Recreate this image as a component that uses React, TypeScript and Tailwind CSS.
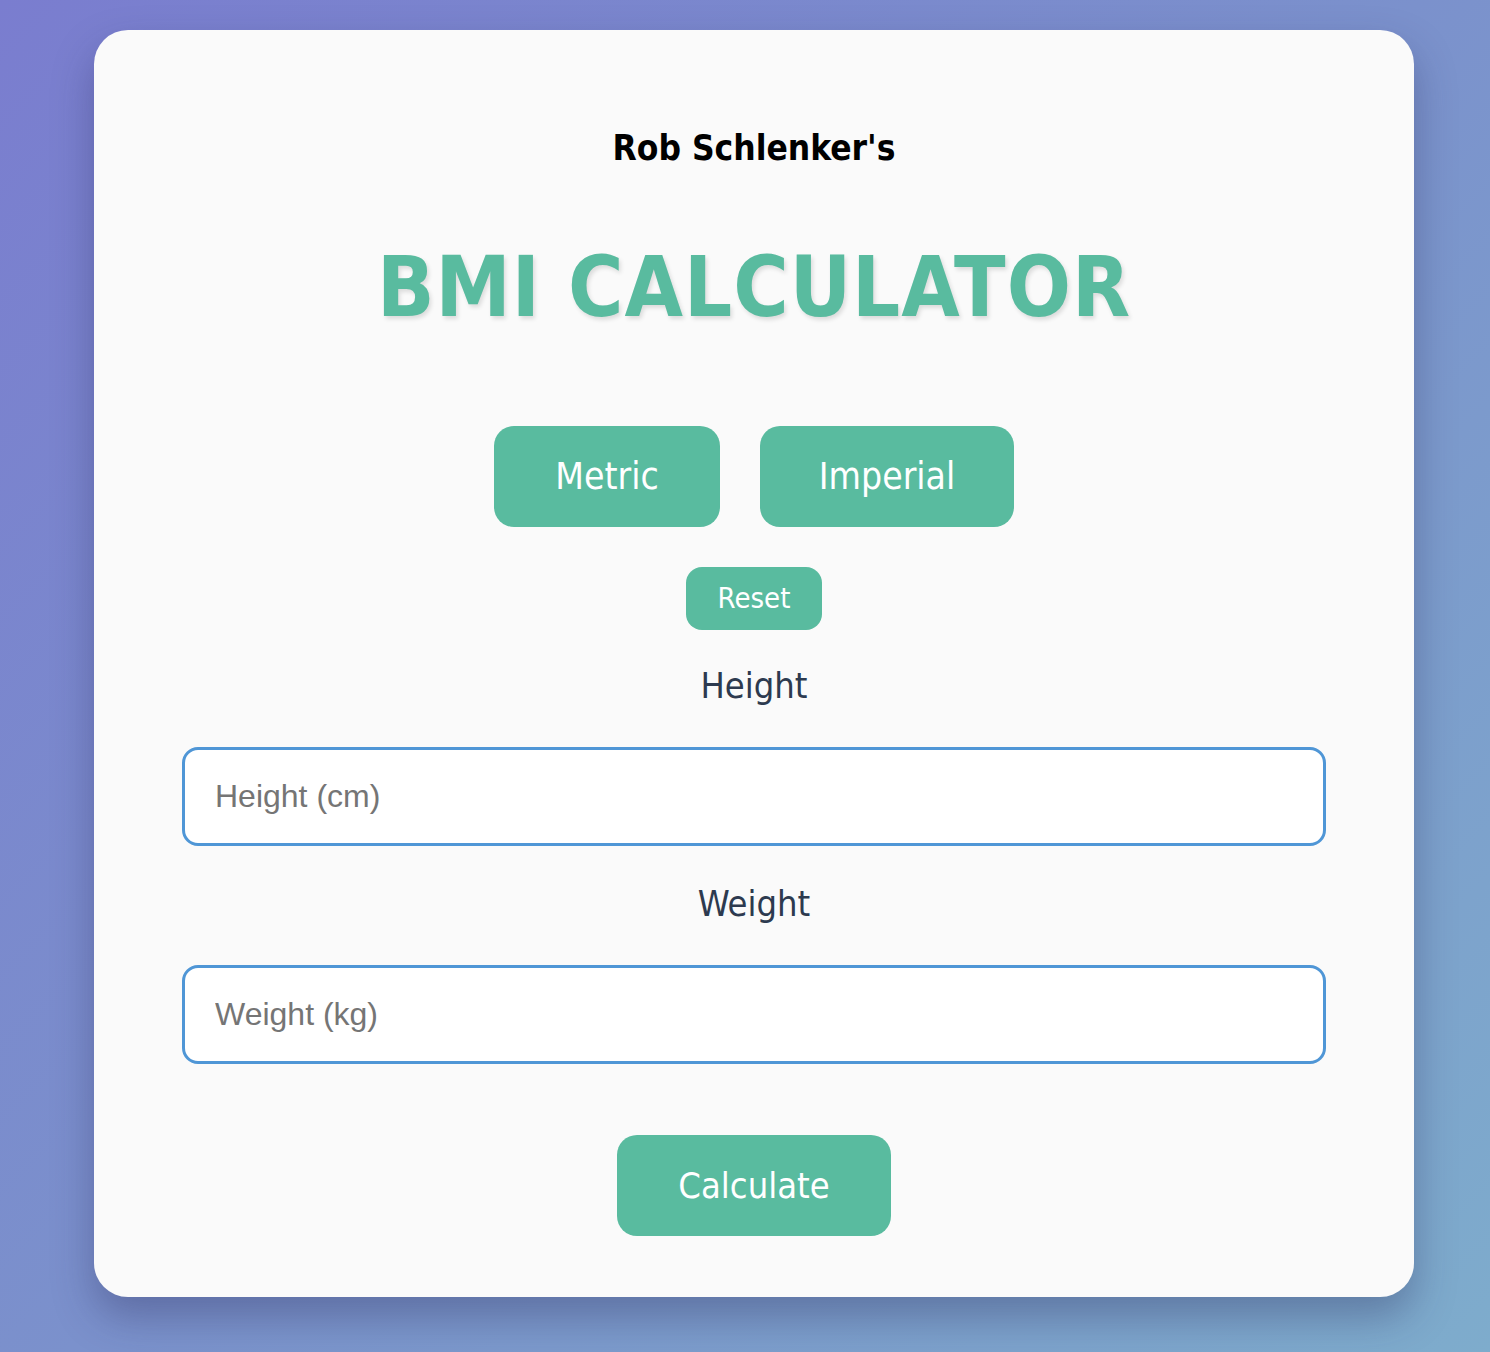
import React, { useState } from "react";

const heading = "font-['DejaVu_Sans_Condensed','DejaVu_Sans',sans-serif]";

export default function App() {
  const [unit, setUnit] = useState<"metric" | "imperial">("metric");
  const [height, setHeight] = useState("");
  const [weight, setWeight] = useState("");

  const reset = () => {
    setHeight("");
    setWeight("");
  };

  return (
    <div className="min-h-[1352px] w-full bg-[linear-gradient(135deg,#7a7dcf_0%,#7b91cc_50%,#7eaccc_100%)] pt-[30px] pb-[55px]">
      <div className={`${heading} ml-[94px] flex w-[1320px] flex-col items-center rounded-[34px] bg-[#fafafa] px-[88px] pt-[98px] pb-[61px] shadow-[0_20px_40px_rgba(40,40,90,0.35)]`}>
        <p className="text-[35px] font-bold leading-[40px] text-black">Rob Schlenker's</p>

        <h1 className="mt-[69px] text-[84px] font-bold leading-[100px] tracking-[1px] text-[#59bb9f] [text-shadow:2px_3px_4px_rgba(0,0,0,0.12)]">
          BMI CALCULATOR
        </h1>

        <div className="mt-[89px] flex gap-[40px]">
          <button
            onClick={() => setUnit("metric")}
            className="h-[101px] w-[226px] rounded-[20px] bg-[#59bb9f] text-[37px] text-white"
          >
            Metric
          </button>
          <button
            onClick={() => setUnit("imperial")}
            className="h-[101px] w-[254px] rounded-[20px] bg-[#59bb9f] text-[37px] text-white"
          >
            Imperial
          </button>
        </div>

        <button
          onClick={reset}
          className="mt-[40px] h-[63px] w-[136px] rounded-[16px] bg-[#59bb9f] text-[29px] text-white"
        >
          Reset
        </button>

        <label className="mt-[34px] text-[36px] leading-[44px] text-[#2d3a4f]">Height</label>
        <input
          value={height}
          onChange={(e) => setHeight(e.target.value)}
          placeholder={unit === "metric" ? "Height (cm)" : "Height (in)"}
          className="mt-[39px] h-[99px] w-full rounded-[16px] border-[3px] border-[#4f96d6] bg-white px-[30px] font-['Liberation_Sans',Arial,sans-serif] text-[32px] text-[#333] placeholder:text-[#757575] focus:outline-none"
        />

        <label className="mt-[36px] text-[36px] leading-[44px] text-[#2d3a4f]">Weight</label>
        <input
          value={weight}
          onChange={(e) => setWeight(e.target.value)}
          placeholder={unit === "metric" ? "Weight (kg)" : "Weight (lbs)"}
          className="mt-[39px] h-[99px] w-full rounded-[16px] border-[3px] border-[#4f96d6] bg-white px-[30px] font-['Liberation_Sans',Arial,sans-serif] text-[32px] text-[#333] placeholder:text-[#757575] focus:outline-none"
        />

        <button className="mt-[71px] h-[101px] w-[274px] rounded-[20px] bg-[#59bb9f] text-[36px] text-white">
          Calculate
        </button>
      </div>
    </div>
  );
}
